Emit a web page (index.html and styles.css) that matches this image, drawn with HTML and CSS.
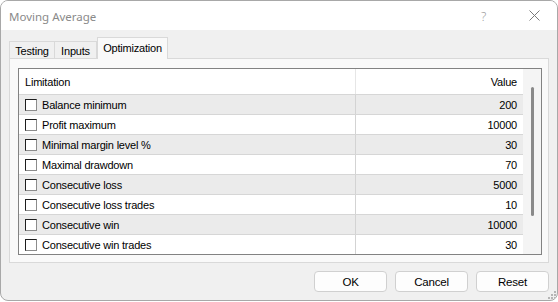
FILE: index.html
```html
<!DOCTYPE html>
<html>
<head>
<meta charset="utf-8">
<link rel="stylesheet" href="styles.css">
</head>
<body>
<div class="window">
  <div class="titlebar">
    <span class="title">Moving Average</span>
    <span class="tb-help">?</span>
    <span class="tb-close"><svg width="11" height="11" viewBox="0 0 11 11"><path d="M0.5 0.5 L10.5 10.5 M10.5 0.5 L0.5 10.5" stroke="#7a7a7a" stroke-width="1" fill="none"/></svg></span>
  </div>
  <div class="client">
    <div class="tabs">
      <div class="tab tab-testing">Testing</div>
      <div class="tab tab-inputs">Inputs</div>
      <div class="tab tab-active">Optimization</div>
    </div>
    <div class="panel">
      <div class="table">
        <div class="cols">
          <div class="row head"><div class="c1">Limitation</div><div class="c2">Value</div></div>
          <div class="row odd"><div class="c1"><span class="cb"></span>Balance minimum</div><div class="c2">200</div></div>
          <div class="row"><div class="c1"><span class="cb"></span>Profit maximum</div><div class="c2">10000</div></div>
          <div class="row odd"><div class="c1"><span class="cb"></span>Minimal margin level %</div><div class="c2">30</div></div>
          <div class="row"><div class="c1"><span class="cb"></span>Maximal drawdown</div><div class="c2">70</div></div>
          <div class="row odd"><div class="c1"><span class="cb"></span>Consecutive loss</div><div class="c2">5000</div></div>
          <div class="row"><div class="c1"><span class="cb"></span>Consecutive loss trades</div><div class="c2">10</div></div>
          <div class="row odd"><div class="c1"><span class="cb"></span>Consecutive win</div><div class="c2">10000</div></div>
          <div class="row last"><div class="c1"><span class="cb"></span>Consecutive win trades</div><div class="c2">30</div></div>
        </div>
        <div class="scroll"><div class="thumb"></div></div>
      </div>
    </div>
    <div class="buttons">
      <div class="btn">OK</div>
      <div class="btn">Cancel</div>
      <div class="btn">Reset</div>
    </div>
  </div>
  <svg class="grip" width="8" height="8" viewBox="0 0 8 8">
    <rect x="6" y="0" width="2" height="2" fill="#b5b5b5"/>
    <rect x="3" y="3" width="2" height="2" fill="#b5b5b5"/>
    <rect x="6" y="3" width="2" height="2" fill="#b5b5b5"/>
    <rect x="0" y="6" width="2" height="2" fill="#b5b5b5"/>
    <rect x="3" y="6" width="2" height="2" fill="#b5b5b5"/>
    <rect x="6" y="6" width="2" height="2" fill="#b5b5b5"/>
  </svg>
</div>
</body>
</html>
```

FILE: styles.css
```css
* { box-sizing: border-box; }
html, body { margin: 0; padding: 0; background: #ffffff; }
body { font-family: "Liberation Sans", Arial, sans-serif; font-size: 11px; color: #000; }

.window {
  position: relative;
  width: 558px;
  height: 301px;
  border: 1px solid #a8a8a8;
  border-radius: 8px;
  overflow: hidden;
  background: #f0f0f0;
  display: flex;
  flex-direction: column;
}

.titlebar {
  height: 29px;
  background: #ffffff;
  display: flex;
  align-items: center;
  padding-left: 8px;
  flex: none;
}
.title {
  font-family: "Noto Sans", "Open Sans", sans-serif;
  font-size: 11.5px;
  color: #8a8a8a;
  flex: 1;
  padding-top: 1px;
}
.tb-help {
  font-family: "Noto Sans", sans-serif;
  font-size: 12.5px;
  font-weight: 300;
  color: #9a9a9a;
  width: 10px;
  margin-right: 38px;
  padding-top: 1px;
}
.tb-close {
  display: flex;
  margin-right: 17px;
}

.client {
  flex: 1;
  padding: 0 8px;
  display: flex;
  flex-direction: column;
}

.tabs {
  margin-top: 7px;
  height: 21px;
  display: flex;
  align-items: flex-end;
}
.tab {
  height: 17px;
  border: 1px solid #d9d9d9;
  border-bottom: none;
  display: flex;
  align-items: center;
  justify-content: center;
  letter-spacing: -0.2px;
  padding-top: 1px;
}
.tab-testing { width: 46px; }
.tab-inputs { width: 42px; border-left: none; }
.tab-active {
  width: 71px;
  height: 22px;
  margin-bottom: -1px;
  background: #f9f9f9;
  position: relative;
  z-index: 1;
  padding-bottom: 3px;
}

.panel {
  height: 205px;
  border: 1px solid #d9d9d9;
  background: #f9f9f9;
  padding: 9px 6px 7px 8px;
}

.table {
  height: 187px;
  border: 1px solid #828282;
  display: flex;
  background: #ffffff;
}
.cols {
  width: 504px;
  display: flex;
  flex-direction: column;
}
.row {
  height: 20px;
  display: flex;
  border-bottom: 1px solid #d6d6d6;
  background: #ffffff;
  letter-spacing: -0.2px;
}
.row.odd { background: #ebebeb; }
.row.last { height: 19px; border-bottom: none; }
.row.head { height: 26px; border-bottom: 1px solid #d6d6d6; }
.c1 {
  width: 337px;
  border-right: 1px solid #d3d3d3;
  display: flex;
  align-items: center;
  padding-left: 6px;
}
.head .c1 { border-right-color: #e6e6e6; }
.c2 {
  width: 167px;
  display: flex;
  align-items: center;
  justify-content: flex-end;
  padding-right: 6px;
}
.cb {
  width: 12px;
  height: 12px;
  border: 1px solid #1e1e1e;
  border-right-color: #8c8c8c;
  border-bottom-color: #8c8c8c;
  background: #ffffff;
  margin-right: 5px;
  flex: none;
}

.scroll {
  width: 18px;
  background: #f4f4f4;
  padding-top: 18px;
  padding-left: 8px;
}
.thumb {
  width: 3px;
  height: 129px;
  background: #898989;
  border-radius: 2px;
}

.buttons {
  margin-top: 8px;
  display: flex;
  justify-content: flex-end;
  gap: 8px;
}
.btn {
  width: 73px;
  height: 21px;
  border: 1px solid #d0d0d0;
  border-radius: 4px;
  background: #fdfdfd;
  display: flex;
  align-items: center;
  justify-content: center;
  font-size: 11.5px;
  letter-spacing: -0.2px;
}

.grip {
  position: absolute;
  right: 1px;
  bottom: 1px;
}
```
